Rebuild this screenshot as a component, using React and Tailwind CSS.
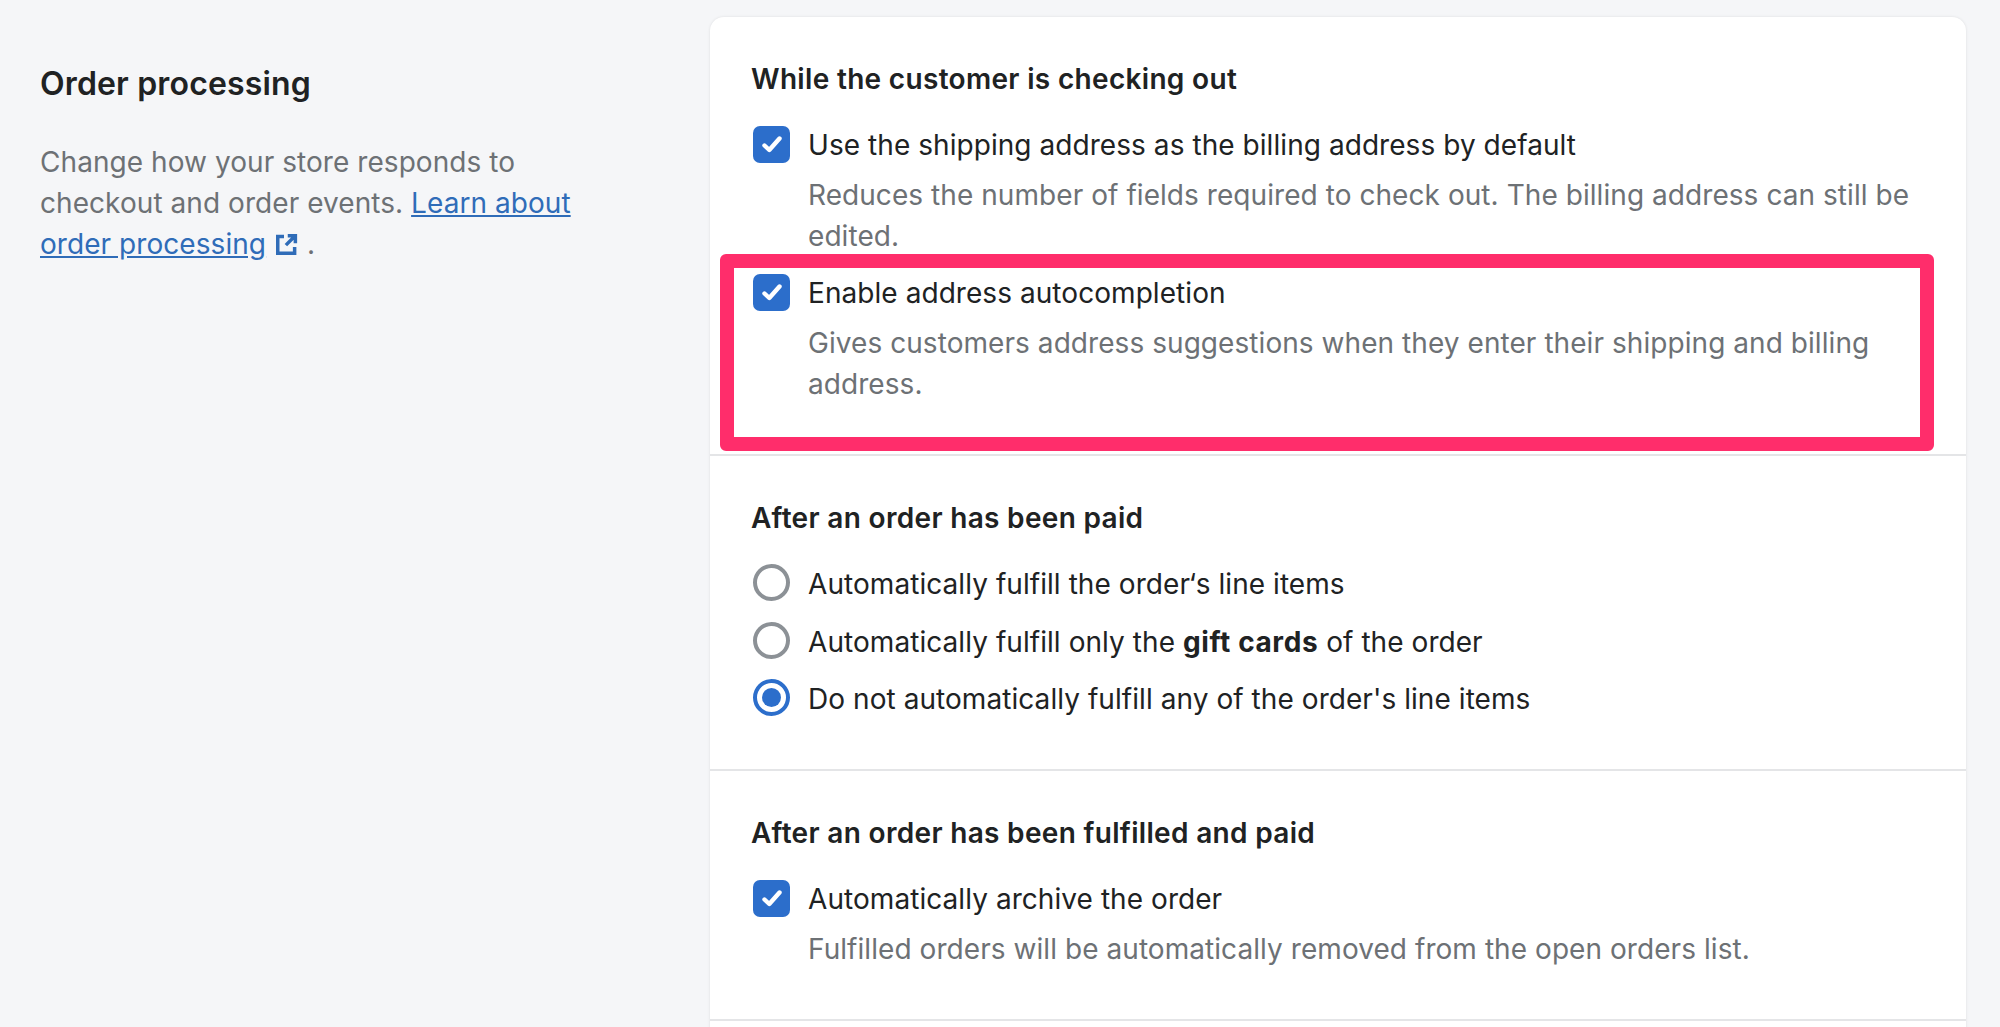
function Checkbox() {
  return (
    <span className="mt-px flex h-[37px] w-[37px] shrink-0 items-center justify-center rounded-[7px] bg-[#2c6ecb]">
      <svg viewBox="0 0 37 37" className="h-[37px] w-[37px]" fill="none" stroke="#ffffff" strokeWidth="4.4" strokeLinecap="round" strokeLinejoin="round">
        <path d="M11.5 19.5 L16.3 24 L26.5 12.5" />
      </svg>
    </span>
  );
}

function Radio({ checked }) {
  return (
    <span className={`flex h-[37px] w-[37px] shrink-0 items-center justify-center rounded-full border-[4px] bg-white ${checked ? "border-[#2c6ecb]" : "border-[#8c9196]"}`}>
      {checked ? <span className="h-[19px] w-[19px] rounded-full bg-[#2c6ecb]" /> : null}
    </span>
  );
}

function Row({ control, label, desc }) {
  return (
    <div className="flex items-start gap-[18px]">
      {control}
      <div className="min-w-0 flex-1">
        <div className="text-[#202223]">{label}</div>
        {desc ? <div className="mt-[9px] text-[#6d7175]">{desc}</div> : null}
      </div>
    </div>
  );
}

function Section({ title, children, last }) {
  return (
    <section className={`pl-[43px] pr-[41px] pt-[42px] pb-[49px] ${last ? "" : "border-b-2 border-[#e4e5e7]"}`}>
      <h2 className="mb-[25px] -ml-[2px] font-semibold tracking-[0.32px] text-[#202223]">{title}</h2>
      {children}
    </section>
  );
}

export default function App() {
  return (
    <div
      className="flex h-[1027px] w-[2000px] overflow-hidden bg-[#f5f6f8] text-[28px] leading-[41px] tracking-[0.06px]"
      style={{ fontFamily: 'Inter, "Liberation Sans", sans-serif' }}
    >
      <aside className="w-[710px] shrink-0 pl-10 pt-[63px]">
        <h1 className="text-[32px] leading-[42px] font-semibold tracking-[0.16px] text-[#202223]">Order processing</h1>
        <p className="mt-[37px] w-[560px] text-[#6d7175]">
          Change how your store responds to checkout and order events.{" "}
          <a className="text-[#2f6cb8] underline" href="#">
            Learn about order processing
          </a>{" "}
          <svg viewBox="0 0 20 20" className="inline-block h-[25px] w-[25px] align-[-3px]" fill="none" stroke="#2f6cb8" strokeWidth="2.8" strokeLinecap="butt">
            <path d="M8 3.5H3V17H16.5V12" />
            <path d="M9.5 10.5L16 4M11 2.9H17.1V9" />
          </svg>{" "}
          .
        </p>
      </aside>

      <main className="relative mt-[17px] h-[1100px] w-[1256px] shrink-0 rounded-t-[14px] bg-white shadow-[0_0_3px_rgba(23,24,24,0.1)]">
        <Section title="While the customer is checking out">
          <div className="flex flex-col gap-4">
            <Row
              control={<Checkbox />}
              label="Use the shipping address as the billing address by default"
              desc="Reduces the number of fields required to check out. The billing address can still be edited."
            />
            <Row
              control={<Checkbox />}
              label="Enable address autocompletion"
              desc="Gives customers address suggestions when they enter their shipping and billing address."
            />
          </div>
        </Section>

        <Section title="After an order has been paid">
          <div className="flex flex-col gap-[16.5px]">
            <Row control={<Radio />} label="Automatically fulfill the order‘s line items" />
            <Row
              control={<Radio />}
              label={
                <>
                  Automatically fulfill only the <b className="font-bold tracking-[0.6px]">gift cards</b> of the order
                </>
              }
            />
            <Row control={<Radio checked />} label="Do not automatically fulfill any of the order's line items" />
          </div>
        </Section>

        <Section title="After an order has been fulfilled and paid">
          <Row
            control={<Checkbox />}
            label="Automatically archive the order"
            desc="Fulfilled orders will be automatically removed from the open orders list."
          />
        </Section>

        <div className="pointer-events-none absolute left-[10px] top-[237px] h-[197px] w-[1214px] rounded-[6px] border-[14px] border-[#ff2d6b]" />
      </main>
    </div>
  );
}
